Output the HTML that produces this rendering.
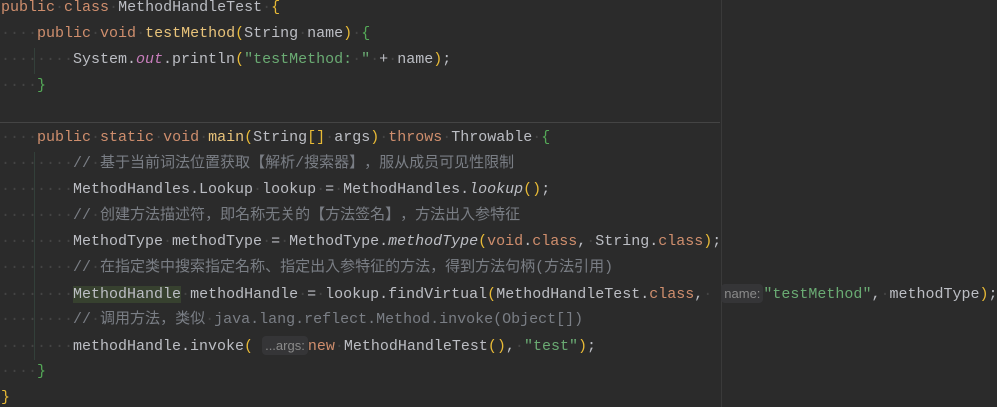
<!DOCTYPE html>
<html><head><meta charset="utf-8"><style>
html,body{margin:0;padding:0;background:#2b2b2b;width:997px;height:407px;overflow:hidden}
.ed{position:relative;width:997px;height:407px;font-family:"Liberation Mono","Noto Sans CJK JP",monospace;font-size:15px;color:#bcbec4}
.l{position:absolute;left:1px;height:26px;line-height:26px;white-space:pre}
.d{color:#444}
.k{color:#cf8e6d}
.m{color:#e8c37a}
.s{color:#6aab73}
.c{color:#7a7e85}
.f{color:#c77dbb;font-style:italic}
.i{font-style:italic}
.y{color:#e8ba36}
.g{color:#54a857}
.p{display:inline-block;width:15px}
.pr{display:inline-block;width:15px;text-align:right}
.h{font-family:"Liberation Sans",sans-serif;font-size:13px;color:#8a8a8a;background:#353537;border-radius:4px;padding:2px 3px}
.hl{background:#37412f}
.sep{position:absolute;left:0;top:122px;width:720px;height:1px;background:#444}
.rm{position:absolute;left:721px;top:0;width:1px;height:407px;background:#3a3a3a}
.gd{position:absolute;width:1px;background:#33403a}
</style></head><body><div class="ed">
<div class="sep"></div><div class="rm"></div>
<div class="gd" style="left:34px;top:48px;height:26px"></div>
<div class="gd" style="left:34px;top:152px;height:208px"></div>
<div class="l" style="top:-5px"><span class="k">public</span><span class="d">·</span><span class="k">class</span><span class="d">·</span>MethodHandleTest<span class="d">·</span><span class="y">{</span></div>
<div class="l" style="top:21px"><span class="d">····</span><span class="k">public</span><span class="d">·</span><span class="k">void</span><span class="d">·</span><span class="m">testMethod</span><span class="y">(</span>String<span class="d">·</span>name<span class="y">)</span><span class="d">·</span><span class="g">{</span></div>
<div class="l" style="top:47px"><span class="d">········</span>System.<span class="f">out</span>.println<span class="y">(</span><span class="s">"testMethod:<span class="d">·</span>"</span><span class="d">·</span>+<span class="d">·</span>name<span class="y">)</span>;</div>
<div class="l" style="top:73px"><span class="d">····</span><span class="g">}</span></div>
<div class="l" style="top:125px"><span class="d">····</span><span class="k">public</span><span class="d">·</span><span class="k">static</span><span class="d">·</span><span class="k">void</span><span class="d">·</span><span class="m">main</span><span class="y">(</span>String<span class="y">[]</span><span class="d">·</span>args<span class="y">)</span><span class="d">·</span><span class="k">throws</span><span class="d">·</span>Throwable<span class="d">·</span><span class="g">{</span></div>
<div class="l" style="top:151px"><span class="d">········</span><span class="c">//<span class="d">·</span>基于当前词法位置获取<span class="pr">【</span>解析/搜索器<span class="p">】</span><span class="p">，</span>服从成员可见性限制</span></div>
<div class="l" style="top:177px"><span class="d">········</span>MethodHandles.Lookup<span class="d">·</span>lookup<span class="d">·</span>=<span class="d">·</span>MethodHandles.<span class="i">lookup</span><span class="y">()</span>;</div>
<div class="l" style="top:203px"><span class="d">········</span><span class="c">//<span class="d">·</span>创建方法描述符<span class="p">，</span>即名称无关的<span class="pr">【</span>方法签名<span class="p">】</span><span class="p">，</span>方法出入参特征</span></div>
<div class="l" style="top:229px"><span class="d">········</span>MethodType<span class="d">·</span>methodType<span class="d">·</span>=<span class="d">·</span>MethodType.<span class="i">methodType</span><span class="y">(</span><span class="k">void</span>.<span class="k">class</span>,<span class="d">·</span>String.<span class="k">class</span><span class="y">)</span>;</div>
<div class="l" style="top:255px"><span class="d">········</span><span class="c">//<span class="d">·</span>在指定类中搜索指定名称<span class="p">、</span>指定出入参特征的方法<span class="p">，</span>得到方法句柄(方法引用)</span></div>
<div class="l" style="top:281px"><span class="d">········</span><span class="hl">MethodHandle</span><span class="d">·</span>methodHandle<span class="d">·</span>=<span class="d">·</span>lookup.findVirtual<span class="y">(</span>MethodHandleTest.<span class="k">class</span>,<span class="d">·</span> <span class="h">name:</span><span class="s">"testMethod"</span>,<span class="d">·</span>methodType<span class="y">)</span>;</div>
<div class="l" style="top:307px"><span class="d">········</span><span class="c">//<span class="d">·</span>调用方法<span class="p">，</span>类似<span class="d">·</span>java.lang.reflect.Method.invoke(Object[])</span></div>
<div class="l" style="top:333px"><span class="d">········</span>methodHandle.invoke<span class="y">(</span> <span class="h">...args:</span><span class="k">new</span><span class="d">·</span>MethodHandleTest<span class="y">()</span>,<span class="d">·</span><span class="s">"test"</span><span class="y">)</span>;</div>
<div class="l" style="top:359px"><span class="d">····</span><span class="g">}</span></div>
<div class="l" style="top:385px"><span class="y">}</span></div>
</div></body></html>
